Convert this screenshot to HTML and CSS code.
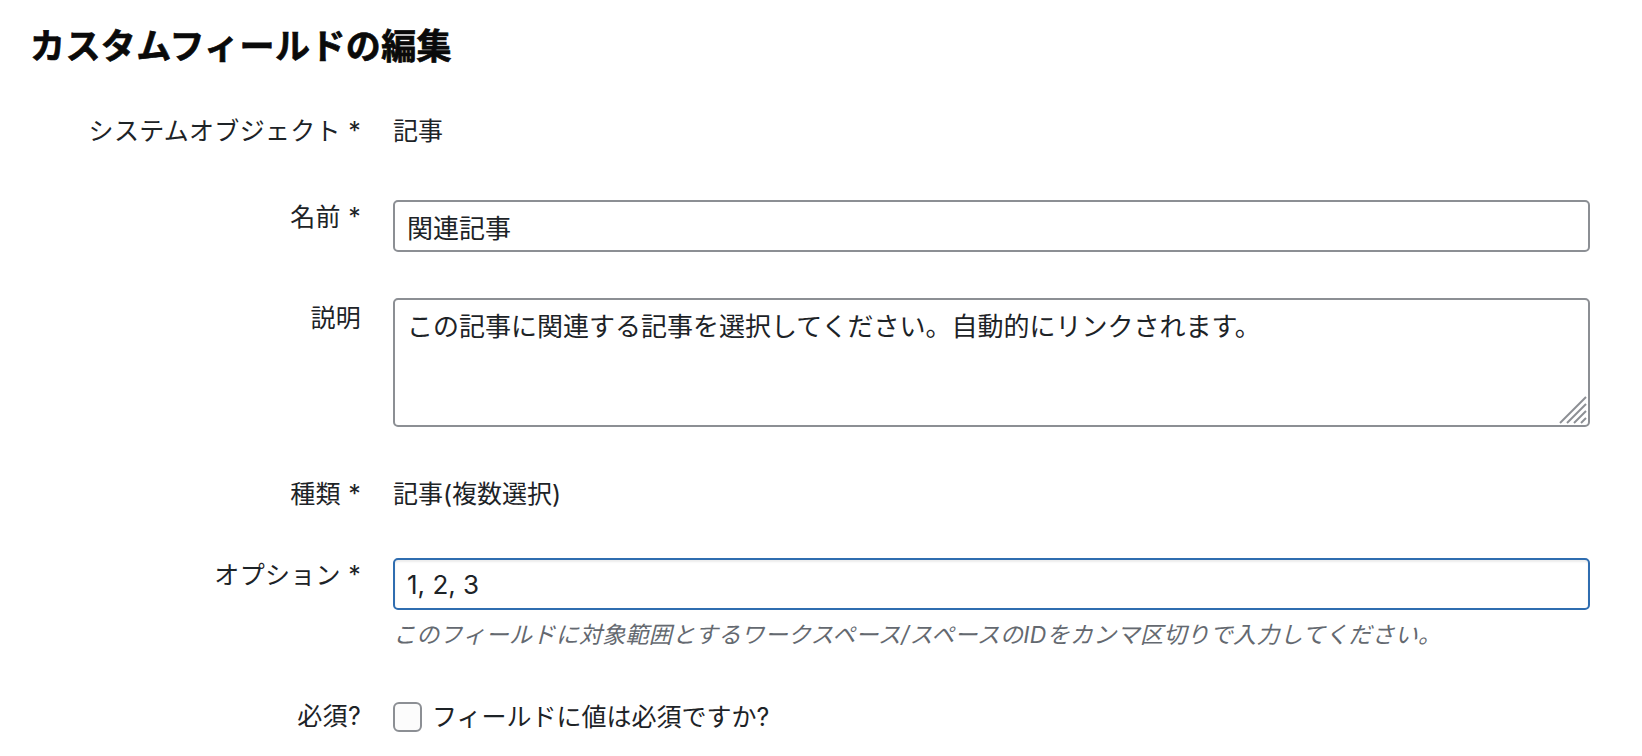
FILE: index.html
```html
<!DOCTYPE html>
<html lang="ja">
<head>
<meta charset="utf-8">
<title>カスタムフィールドの編集</title>
<link rel="stylesheet" href="styles.css">
</head>
<body>
<div class="wrap">
  <h1 class="page-title">カスタムフィールドの編集</h1>
  <form class="form">
    <div class="row row-system">
      <div class="label">システムオブジェクト *</div>
      <div class="field"><span class="value">記事</span></div>
    </div>
    <div class="row row-name">
      <label class="label" for="name">名前 *</label>
      <div class="field"><input id="name" class="text-input" type="text" value="関連記事"></div>
    </div>
    <div class="row row-desc">
      <label class="label label-pad" for="desc">説明</label>
      <div class="field">
        <div class="textarea-wrap">
          <textarea id="desc" class="textarea">この記事に関連する記事を選択してください。自動的にリンクされます。</textarea>
          <svg class="resize-grip" width="28" height="28" viewBox="0 0 28 28" aria-hidden="true">
            <line x1="1" y1="27" x2="27" y2="1"/>
            <line x1="8" y1="27" x2="27" y2="8"/>
            <line x1="15" y1="27" x2="27" y2="15"/>
            <line x1="22" y1="27" x2="27" y2="22"/>
          </svg>
        </div>
      </div>
    </div>
    <div class="row row-type">
      <div class="label">種類 *</div>
      <div class="field"><span class="value">記事(複数選択)</span></div>
    </div>
    <div class="row row-options">
      <label class="label" for="options">オプション *</label>
      <div class="field">
        <input id="options" class="text-input is-focused" type="text" value="1, 2, 3">
        <p class="description">このフィールドに対象範囲とするワークスペース/スペースのIDをカンマ区切りで入力してください。</p>
      </div>
    </div>
    <div class="row row-required">
      <label class="label" for="required">必須?</label>
      <div class="field check-field">
        <input id="required" class="checkbox" type="checkbox">
        <label class="check-label" for="required">フィールドに値は必須ですか?</label>
      </div>
    </div>
  </form>
</div>
</body>
</html>
```

FILE: styles.css
```css
html, body {
  margin: 0;
  padding: 0;
  background: #ffffff;
}

body {
  font-family: "Inter", "Noto Sans CJK JP", sans-serif;
  color: #1d2327;
  font-size: 25px;
  line-height: 35px;
}

.wrap {
  padding: 24px 52px 0 30px;
}

.page-title {
  margin: 0;
  font-size: 35px;
  line-height: 45px;
  font-weight: 700;
  color: #0a0a0a;
  letter-spacing: 0.4px;
  -webkit-text-stroke: 0.7px #0a0a0a;
}

.form {
  margin-top: 45px;
}

.row {
  display: grid;
  grid-template-columns: 331px 1fr;
  column-gap: 32px;
  align-items: start;
}

.row-name { margin-top: 51px; }
.row-desc { margin-top: 46px; }
.row-type { margin-top: 50px; }
.row-options { margin-top: 46px; }
.row-required { margin-top: 48px; align-items: center; }

.label {
  text-align: right;
  display: block;
  line-height: 35px;
  letter-spacing: 0.3px;
}

.label-pad {
  padding-top: 3px;
}

.value {
  display: block;
  line-height: 35px;
}

.text-input,
.textarea {
  box-sizing: border-box;
  width: 100%;
  margin: 0;
  font-family: "Inter", "Noto Sans CJK JP", sans-serif;
  font-size: 26px;
  line-height: 35px;
  color: #1d2327;
  background: #ffffff;
  border: 2px solid #8c8f94;
  border-radius: 5px;
  outline: none;
}

.text-input {
  display: block;
  height: 52px;
  padding: 6px 12px;
}

.text-input.is-focused {
  border-color: #2f6db0;
  box-shadow: inset 0 2px 2px rgba(0, 0, 0, 0.08);
}

.textarea-wrap {
  position: relative;
}

.textarea {
  display: block;
  height: 129px;
  padding: 9px 12px;
  resize: none;
}

.resize-grip {
  position: absolute;
  right: 3px;
  bottom: 3px;
}

.resize-grip line {
  stroke: #8c8f94;
  stroke-width: 2;
}

.description {
  margin: 9px 0 0;
  font-size: 23px;
  line-height: 32px;
  font-style: italic;
  color: #646970;
  letter-spacing: 0.3px;
}

.check-field {
  display: flex;
  align-items: center;
  gap: 10px;
}

.checkbox {
  appearance: none;
  -webkit-appearance: none;
  box-sizing: border-box;
  width: 29px;
  height: 30px;
  margin: 0;
  border: 2px solid #8c8f94;
  border-radius: 6px;
  background: #fcfcfc;
}

.check-label {
  line-height: 30px;
}
```
